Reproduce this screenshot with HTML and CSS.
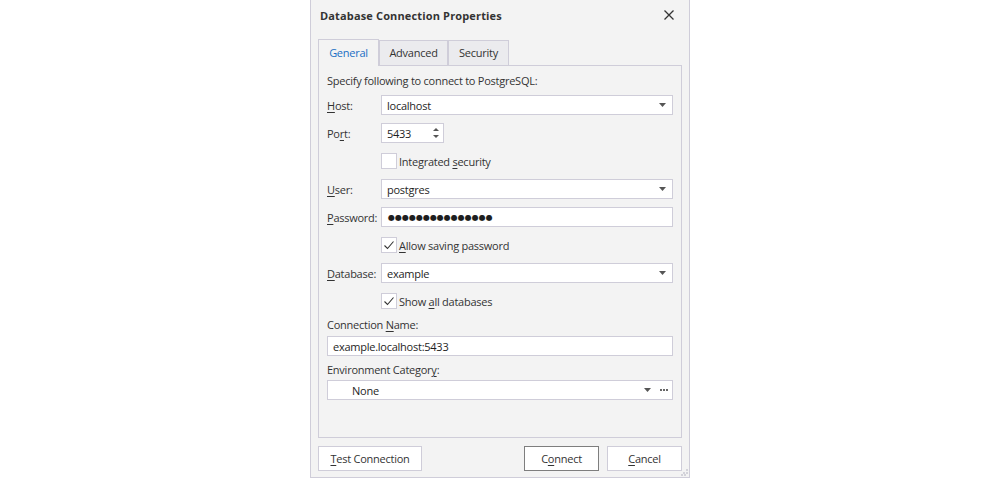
FILE: index.html
```html
<!DOCTYPE html>
<html lang="en">
<head>
    <meta charset="UTF-8">
    <title>Database Connection Properties</title>
    <link rel="stylesheet" href="styles.css">
</head>
<body>
    <div class="dialog">
        <div class="titlebar">
            <span class="title">Database Connection Properties</span>
            <span class="close">
                <svg width="10" height="10" viewBox="0 0 10 10"><path d="M0.5 0.5L9.5 9.5M9.5 0.5L0.5 9.5" stroke="#333" stroke-width="1.3"/></svg>
            </span>
        </div>

        <div class="content">
            <div class="tabs">
                <div class="tab active" style="width: 59px">General</div>
                <div class="tab" style="width: 67px">Advanced</div>
                <div class="tab" style="width: 59px">Security</div>
            </div>

            <div class="panel">
                <div class="intro">Specify following to connect to PostgreSQL:</div>

                <div class="form">
                    <label><u>H</u>ost:</label>
                    <div class="field combo">
                        <span class="value">localhost</span>
                        <span class="arrow"><svg width="7" height="4" viewBox="0 0 7 4"><polygon points="0,0 7,0 3.5,4" fill="#555"/></svg></span>
                    </div>

                    <label>Po<u>r</u>t:</label>
                    <div class="field spin">
                        <span class="value">5433</span>
                        <span class="spinners">
                            <svg width="6" height="10" viewBox="0 0 6 10"><polygon points="0,3 6,3 3,0" fill="#555"/><polygon points="0,7 6,7 3,10" fill="#555"/></svg>
                        </span>
                    </div>

                    <div class="check-row">
                        <span class="checkbox"></span>
                        <span>Integrated <u>s</u>ecurity</span>
                    </div>

                    <label><u>U</u>ser:</label>
                    <div class="field combo">
                        <span class="value">postgres</span>
                        <span class="arrow"><svg width="7" height="4" viewBox="0 0 7 4"><polygon points="0,0 7,0 3.5,4" fill="#555"/></svg></span>
                    </div>

                    <label><u>P</u>assword:</label>
                    <div class="field">
                        <span class="value dots">●●●●●●●●●●●●●●●</span>
                    </div>

                    <div class="check-row">
                        <span class="checkbox">
                            <svg width="14" height="14" viewBox="0 0 14 14"><path d="M2.5 7.5L5.5 10.5L11.5 3.5" stroke="#333" stroke-width="1.1" fill="none"/></svg>
                        </span>
                        <span><u>A</u>llow saving password</span>
                    </div>

                    <label><u>D</u>atabase:</label>
                    <div class="field combo">
                        <span class="value">example</span>
                        <span class="arrow"><svg width="7" height="4" viewBox="0 0 7 4"><polygon points="0,0 7,0 3.5,4" fill="#555"/></svg></span>
                    </div>

                    <div class="check-row">
                        <span class="checkbox">
                            <svg width="14" height="14" viewBox="0 0 14 14"><path d="M2.5 7.5L5.5 10.5L11.5 3.5" stroke="#333" stroke-width="1.1" fill="none"/></svg>
                        </span>
                        <span>Show <u>a</u>ll databases</span>
                    </div>
                </div>

                <div class="caption first">Connection <u>N</u>ame:</div>
                <div class="field">
                    <span class="value">example.localhost:5433</span>
                </div>

                <div class="caption">Environment Categor<u>y</u>:</div>
                <div class="field combo">
                    <span class="value indent">None</span>
                    <span class="arrow"><svg width="7" height="4" viewBox="0 0 7 4"><polygon points="0,0 7,0 3.5,4" fill="#555"/></svg></span>
                    <span class="more"><svg width="8" height="2" viewBox="0 0 8 2"><rect x="0" y="0" width="2" height="2" fill="#666"/><rect x="3" y="0" width="2" height="2" fill="#666"/><rect x="6" y="0" width="2" height="2" fill="#666"/></svg></span>
                </div>
            </div>

            <div class="buttons">
                <button class="btn test"><u>T</u>est Connection</button>
                <button class="btn default">C<u>o</u>nnect</button>
                <button class="btn"><u>C</u>ancel</button>
            </div>
        </div>

        <svg class="grip" width="7" height="7" viewBox="0 0 7 7">
            <rect x="5" y="0" width="2" height="2" fill="#d3d3da"/>
            <rect x="2" y="3" width="2" height="2" fill="#d3d3da"/>
            <rect x="5" y="3" width="2" height="2" fill="#d3d3da"/>
            <rect x="0" y="5" width="2" height="2" fill="#d3d3da"/>
            <rect x="3" y="5" width="2" height="2" fill="#d3d3da"/>
        </svg>
    </div>
</body>
</html>
```

FILE: styles.css
```css
body {
    margin: 0;
    padding: 0;
    background: #ffffff;
    font-family: "Open Sans", "Noto Sans", sans-serif;
    font-size: 11px;
    letter-spacing: -0.25px;
    color: #333333;
    display: flex;
    justify-content: center;
}

u {
    text-decoration-thickness: 1px;
    text-underline-offset: 2px;
}

.dialog {
    width: 378px;
    height: 477px;
    background: #f3f3f3;
    border: 1px solid #cfcdd9;
    border-top: none;
    display: flex;
    flex-direction: column;
    position: relative;
}

.titlebar {
    height: 30px;
    display: flex;
    align-items: center;
    justify-content: space-between;
    padding: 0 15px 0 9px;
}

.title {
    font-weight: bold;
    letter-spacing: 0.15px;
    color: #333333;
}

.close {
    display: flex;
}

.content {
    flex: 1;
    display: flex;
    flex-direction: column;
    padding: 9px 7px 6px 7px;
}

.tabs {
    height: 26px;
    display: flex;
    align-items: flex-end;
}

.tab {
    height: 24px;
    line-height: 24px;
    text-align: center;
    background: #ebebee;
    border: 1px solid #cfcdd9;
    border-bottom: none;
}

.tab.active {
    height: 26px;
    line-height: 26px;
    margin-bottom: -1px;
    background: #f3f3f3;
    color: #1a6fc4;
    position: relative;
    z-index: 1;
}

.panel {
    flex: 1;
    border: 1px solid #cfcdd9;
    padding: 5px 8px 0 8px;
}

.intro {
    height: 20px;
    line-height: 20px;
    margin-bottom: 4px;
}

.form {
    display: grid;
    grid-template-columns: 54px 1fr;
    grid-auto-rows: 20px;
    row-gap: 8px;
    align-items: center;
}

.field {
    height: 18px;
    background: #ffffff;
    border: 1px solid #cfcdd9;
    display: flex;
    align-items: center;
    padding: 0 0 0 5px;
    color: #1e1e1e;
}

.field .value {
    flex: 1;
}

.spin {
    width: 56px;
}

.spinners {
    display: flex;
    padding-right: 4px;
}

.arrow {
    display: flex;
    padding: 0 6px 0 4px;
}

.more {
    display: flex;
    padding: 0 4px 0 3px;
}

.dots {
    font-family: "DejaVu Sans", sans-serif;
    font-size: 8px;
    letter-spacing: 0;
    padding-left: 1px;
}

.indent {
    padding-left: 19px;
}

.check-row {
    grid-column: 2;
    display: flex;
    align-items: center;
    gap: 2px;
}

.checkbox {
    width: 14px;
    height: 14px;
    background: #ffffff;
    border: 1px solid #cfcdd9;
    display: flex;
}

.caption {
    height: 16px;
    line-height: 16px;
    margin: 6px 0 2px 0;
}

.caption.first {
    margin: 6px 0 3px 0;
}

.buttons {
    display: flex;
    gap: 8px;
    margin-top: 8px;
}

.btn {
    height: 25px;
    width: 75px;
    padding: 0;
    background: #ffffff;
    border: 1px solid #cfcdd9;
    font-family: inherit;
    font-size: 11px;
    letter-spacing: -0.25px;
    color: #333333;
}

.btn.test {
    width: 104px;
    margin-right: auto;
}

.btn.default {
    border-color: #7e7e7e;
}

.grip {
    position: absolute;
    right: 1px;
    bottom: 1px;
}
```
